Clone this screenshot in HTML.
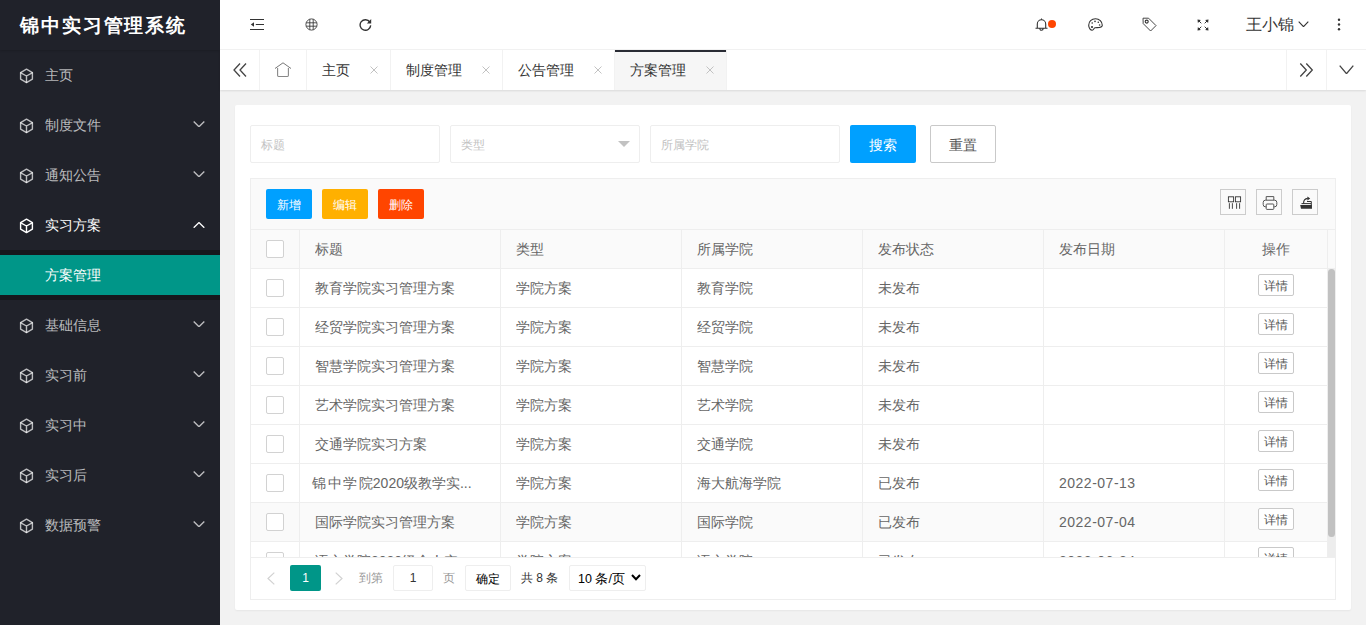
<!DOCTYPE html>
<html><head><meta charset="utf-8"><style>
*{margin:0;padding:0;box-sizing:border-box}
html,body{width:1366px;height:625px;overflow:hidden}
body{background:#f2f2f2;font-family:"Liberation Sans",sans-serif;font-size:14px;color:#333;position:relative}
.a{position:absolute}
svg{display:block;position:absolute}
#side{left:0;top:0;width:220px;height:625px;background:#20222A}
#logo{left:0;top:0;width:220px;height:50px;background:#20222A;box-shadow:0 1px 2px 0 rgba(0,0,0,.15);color:#fff;font-size:19px;font-weight:bold;line-height:51px;padding-left:20px;letter-spacing:1.9px;white-space:nowrap}
.mi{left:0;width:220px;height:50px;line-height:50px;color:rgba(255,255,255,.7);font-size:14px}
.mi .t{position:absolute;left:45px;top:0}
.mi.on{color:#fff}
#child{left:0;top:250px;width:220px;height:50px;background:rgba(0,0,0,.3)}
#cact{left:0;top:255px;width:220px;height:40px;background:#009688;color:#fff;line-height:40px;font-size:14px}
#cact .t{position:absolute;left:45px;top:0}
#hdr{left:220px;top:0;width:1146px;height:50px;background:#fff;border-bottom:1px solid #f2f2f2}
#tabs{left:220px;top:50px;width:1146px;height:40px;background:#fff;box-shadow:0 1px 2px 0 rgba(0,0,0,.1)}
.tb{top:50px;height:40px;line-height:40px;border-right:1px solid #f2f2f2;color:#333;font-size:14px;white-space:nowrap}
.tb .t{position:absolute;top:0}
.tb svg{top:16px}
#card{left:235px;top:105px;width:1116px;height:505px;background:#fff;border-radius:2px;box-shadow:0 1px 2px 0 rgba(0,0,0,.05)}
.inp{top:125px;height:38px;border:1px solid #eee;border-radius:2px;background:#fff;color:#c2c2c2;font-size:12px;line-height:36px;padding-left:10px;padding-top:1px}
.btn{top:125px;height:38px;line-height:38px;padding-top:1px;border-radius:2px;text-align:center;font-size:14px}
.sbtn{top:189px;width:46px;height:30px;line-height:30px;padding-top:1px;color:#fff;font-size:12px;text-align:center;border-radius:2px}
.tic{top:189px;width:26px;height:26px;border:1px solid #ccc}
.vl{width:1px;background:#eee}
.hl{height:1px;background:#eee}
.ct{color:#666;font-size:14px;white-space:nowrap;height:39px;line-height:39px;padding-top:1px;overflow:hidden;text-overflow:ellipsis}
.cb{width:18px;height:18px;border:1px solid #d2d2d2;border-radius:2px;background:#fff}
.dt{width:36px;height:22px;border:1px solid #c9c9c9;border-radius:2px;background:#fff;color:#555;font-size:12px;line-height:20px;padding-top:1px;text-align:center}
.pg{font-size:12px;white-space:nowrap}
</style></head><body>
<div class="a " id="side" style=""></div>
<div class="a" id="logo">锦中实习管理系统</div>
<div class="a mi" style="top:50px"><span class="t">主页</span><svg style="left:19px;top:18px" width="15" height="16" viewBox="0 0 15 16"><g fill="none" stroke="rgba(255,255,255,.7)" stroke-width="1.4" stroke-linejoin="round" stroke-linecap="round"><path d="M7.5 1.2 L13.4 4.6 L13.4 11.2 L7.5 14.6 L1.6 11.2 L1.6 4.6 Z"/><path d="M1.8 4.8 L7.5 8 L13.2 4.8 M7.5 8 L7.5 14.4"/></g></svg></div>
<div class="a mi" style="top:100px"><span class="t">制度文件</span><svg style="left:19px;top:18px" width="15" height="16" viewBox="0 0 15 16"><g fill="none" stroke="rgba(255,255,255,.7)" stroke-width="1.4" stroke-linejoin="round" stroke-linecap="round"><path d="M7.5 1.2 L13.4 4.6 L13.4 11.2 L7.5 14.6 L1.6 11.2 L1.6 4.6 Z"/><path d="M1.8 4.8 L7.5 8 L13.2 4.8 M7.5 8 L7.5 14.4"/></g></svg><svg style="left:193px;top:21px" width="12" height="6" viewBox="0 0 12 6"><path d="M0.7 0.6 L6.0 5.7 L11.3 0.6" fill="none" stroke="rgba(255,255,255,.7)" stroke-width="1.4"/></svg></div>
<div class="a mi" style="top:150px"><span class="t">通知公告</span><svg style="left:19px;top:18px" width="15" height="16" viewBox="0 0 15 16"><g fill="none" stroke="rgba(255,255,255,.7)" stroke-width="1.4" stroke-linejoin="round" stroke-linecap="round"><path d="M7.5 1.2 L13.4 4.6 L13.4 11.2 L7.5 14.6 L1.6 11.2 L1.6 4.6 Z"/><path d="M1.8 4.8 L7.5 8 L13.2 4.8 M7.5 8 L7.5 14.4"/></g></svg><svg style="left:193px;top:21px" width="12" height="6" viewBox="0 0 12 6"><path d="M0.7 0.6 L6.0 5.7 L11.3 0.6" fill="none" stroke="rgba(255,255,255,.7)" stroke-width="1.4"/></svg></div>
<div class="a mi on" style="top:200px"><span class="t">实习方案</span><svg style="left:19px;top:18px" width="15" height="16" viewBox="0 0 15 16"><g fill="none" stroke="#fff" stroke-width="1.4" stroke-linejoin="round" stroke-linecap="round"><path d="M7.5 1.2 L13.4 4.6 L13.4 11.2 L7.5 14.6 L1.6 11.2 L1.6 4.6 Z"/><path d="M1.8 4.8 L7.5 8 L13.2 4.8 M7.5 8 L7.5 14.4"/></g></svg><svg style="left:193px;top:22px" width="12" height="6" viewBox="0 0 12 6"><path d="M0.7 5.7 L6.0 0.6 L11.3 5.7" fill="none" stroke="#fff" stroke-width="1.4"/></svg></div>
<div class="a mi" style="top:300px"><span class="t">基础信息</span><svg style="left:19px;top:18px" width="15" height="16" viewBox="0 0 15 16"><g fill="none" stroke="rgba(255,255,255,.7)" stroke-width="1.4" stroke-linejoin="round" stroke-linecap="round"><path d="M7.5 1.2 L13.4 4.6 L13.4 11.2 L7.5 14.6 L1.6 11.2 L1.6 4.6 Z"/><path d="M1.8 4.8 L7.5 8 L13.2 4.8 M7.5 8 L7.5 14.4"/></g></svg><svg style="left:193px;top:21px" width="12" height="6" viewBox="0 0 12 6"><path d="M0.7 0.6 L6.0 5.7 L11.3 0.6" fill="none" stroke="rgba(255,255,255,.7)" stroke-width="1.4"/></svg></div>
<div class="a mi" style="top:350px"><span class="t">实习前</span><svg style="left:19px;top:18px" width="15" height="16" viewBox="0 0 15 16"><g fill="none" stroke="rgba(255,255,255,.7)" stroke-width="1.4" stroke-linejoin="round" stroke-linecap="round"><path d="M7.5 1.2 L13.4 4.6 L13.4 11.2 L7.5 14.6 L1.6 11.2 L1.6 4.6 Z"/><path d="M1.8 4.8 L7.5 8 L13.2 4.8 M7.5 8 L7.5 14.4"/></g></svg><svg style="left:193px;top:21px" width="12" height="6" viewBox="0 0 12 6"><path d="M0.7 0.6 L6.0 5.7 L11.3 0.6" fill="none" stroke="rgba(255,255,255,.7)" stroke-width="1.4"/></svg></div>
<div class="a mi" style="top:400px"><span class="t">实习中</span><svg style="left:19px;top:18px" width="15" height="16" viewBox="0 0 15 16"><g fill="none" stroke="rgba(255,255,255,.7)" stroke-width="1.4" stroke-linejoin="round" stroke-linecap="round"><path d="M7.5 1.2 L13.4 4.6 L13.4 11.2 L7.5 14.6 L1.6 11.2 L1.6 4.6 Z"/><path d="M1.8 4.8 L7.5 8 L13.2 4.8 M7.5 8 L7.5 14.4"/></g></svg><svg style="left:193px;top:21px" width="12" height="6" viewBox="0 0 12 6"><path d="M0.7 0.6 L6.0 5.7 L11.3 0.6" fill="none" stroke="rgba(255,255,255,.7)" stroke-width="1.4"/></svg></div>
<div class="a mi" style="top:450px"><span class="t">实习后</span><svg style="left:19px;top:18px" width="15" height="16" viewBox="0 0 15 16"><g fill="none" stroke="rgba(255,255,255,.7)" stroke-width="1.4" stroke-linejoin="round" stroke-linecap="round"><path d="M7.5 1.2 L13.4 4.6 L13.4 11.2 L7.5 14.6 L1.6 11.2 L1.6 4.6 Z"/><path d="M1.8 4.8 L7.5 8 L13.2 4.8 M7.5 8 L7.5 14.4"/></g></svg><svg style="left:193px;top:21px" width="12" height="6" viewBox="0 0 12 6"><path d="M0.7 0.6 L6.0 5.7 L11.3 0.6" fill="none" stroke="rgba(255,255,255,.7)" stroke-width="1.4"/></svg></div>
<div class="a mi" style="top:500px"><span class="t">数据预警</span><svg style="left:19px;top:18px" width="15" height="16" viewBox="0 0 15 16"><g fill="none" stroke="rgba(255,255,255,.7)" stroke-width="1.4" stroke-linejoin="round" stroke-linecap="round"><path d="M7.5 1.2 L13.4 4.6 L13.4 11.2 L7.5 14.6 L1.6 11.2 L1.6 4.6 Z"/><path d="M1.8 4.8 L7.5 8 L13.2 4.8 M7.5 8 L7.5 14.4"/></g></svg><svg style="left:193px;top:21px" width="12" height="6" viewBox="0 0 12 6"><path d="M0.7 0.6 L6.0 5.7 L11.3 0.6" fill="none" stroke="rgba(255,255,255,.7)" stroke-width="1.4"/></svg></div>
<div class="a" id="child"></div>
<div class="a" id="cact"><span class="t">方案管理</span></div>
<div class="a" id="hdr"></div>
<svg style="left:250px;top:19px" width="14" height="12" viewBox="0 0 14 12"><g stroke="#333" stroke-width="1.2" fill="none"><path d="M0 0.5H14M5.8 5.5H14M0 10.5H14"/></g><path d="M0.8 5.5 L4 3.2 L4 7.8 Z" fill="#333"/></svg>
<svg style="left:305px;top:18px" width="13" height="13" viewBox="0 0 13 13"><g stroke="#333" stroke-width="0.85" fill="none"><circle cx="6.5" cy="6.5" r="5.6"/><path d="M4.8 1.2V11.8M8.2 1.2V11.8M1.2 4.8H11.8M1.2 8.2H11.8"/></g></svg>
<svg style="left:359px;top:18px" width="13" height="13" viewBox="0 0 13 13"><path d="M10.8 4 A5.3 5.3 0 1 0 11.7 7.4" fill="none" stroke="#333" stroke-width="1.4"/><path d="M12.2 1 L12.2 5.6 L7.8 5.6 Z" fill="#333"/></svg>
<svg style="left:1035px;top:18px" width="13" height="13" viewBox="0 0 13 13"><g fill="none" stroke="#333" stroke-width="1.1"><path d="M2.3 10.2 V6 A4.2 4.2 0 0 1 10.7 6 V10.2 M0.5 10.3 H12.5 M4.8 10.6 A1.7 1.7 0 0 0 8.2 10.6"/><path d="M6.5 0.5V1.8"/></g></svg>
<div class="a" style="left:1048px;top:20px;width:8px;height:8px;border-radius:50%;background:#FF4500"></div>
<svg style="left:1088px;top:18px" width="15" height="13" viewBox="0 0 15 13"><path d="M7.5 0.8 C3.5 0.8 0.7 3.8 0.7 7.2 C0.7 10.3 2.6 12.2 4.2 12.2 C5.8 12.2 5.6 10.2 7 9.8 C9 9.3 14.3 10.3 14.3 7.2 C14.3 3.6 11.3 0.8 7.5 0.8 Z" fill="none" stroke="#333" stroke-width="1.1"/><circle cx="4" cy="9" r="1.1" fill="#333"/><circle cx="4.2" cy="5" r="0.8" fill="#333"/><circle cx="7" cy="3.4" r="0.8" fill="#333"/><circle cx="10.3" cy="4.2" r="0.8" fill="#333"/><circle cx="11.6" cy="7" r="0.8" fill="#333"/></svg>
<svg style="left:1142px;top:17px" width="15" height="15" viewBox="0 0 15 15"><path d="M1 1.2 H6.6 L14 8.6 L8.6 14 L1.2 6.6 Z" fill="none" stroke="#333" stroke-width="0.9" stroke-linejoin="round"/><circle cx="4.7" cy="4.6" r="1.5" fill="none" stroke="#333" stroke-width="1.1"/></svg>
<svg style="left:1197px;top:19px" width="12" height="12" viewBox="0 0 12 12"><path d="M0.5 0.5L3.9 0.9L0.9 3.9Z M11.5 0.5L8.1 0.9L11.1 3.9Z M0.5 11.5L3.9 11.1L0.9 8.1Z M11.5 11.5L8.1 11.1L11.1 8.1Z" fill="#333"/><path d="M1.5 1.5L4.3 4.3M10.5 1.5L7.7 4.3M1.5 10.5L4.3 7.7M10.5 10.5L7.7 7.7" stroke="#333" stroke-width="1"/></svg>
<div class="a" style="left:1246px;top:0;height:50px;line-height:50px;font-size:16px;color:#333;white-space:nowrap">王小锦</div>
<svg style="left:1298px;top:21px" width="11" height="6" viewBox="0 0 11 6"><path d="M0.7 0.6 L5.5 5.7 L10.3 0.6" fill="none" stroke="#333" stroke-width="1.1"/></svg>
<svg style="left:1337px;top:18px" width="4" height="13" viewBox="0 0 4 13"><g fill="#333"><circle cx="2" cy="1.8" r="1.2"/><circle cx="2" cy="6.5" r="1.2"/><circle cx="2" cy="11.2" r="1.2"/></g></svg>
<div class="a" id="tabs"></div>
<div class="a tb" style="left:220px;width:40px;border-right:1px solid #f2f2f2"></div>
<svg style="left:232px;top:62px" width="16" height="16" viewBox="0 0 16 16"><path d="M8 1.5 L2 8 L8 14.5 M14 1.5 L8 8 L14 14.5" fill="none" stroke="#444" stroke-width="1.3"/></svg>
<div class="a tb" style="left:260px;width:47px"></div>
<svg style="left:274px;top:62px" width="18" height="16" viewBox="0 0 18 16"><path d="M1 6.5 L9 0.8 L17 6.5" fill="none" stroke="#777" stroke-width="1"/><path d="M3.6 6 V13.6 Q3.6 14.5 4.5 14.5 H13.5 Q14.4 14.5 14.4 13.6 V6" fill="none" stroke="#888" stroke-width="1.1"/></svg>
<div class="a tb" style="left:307px;width:84px;"><span class="t" style="left:15px">主页</span><svg style="left:63px;top:16px" width="8" height="8" viewBox="0 0 8 8"><path d="M0.5 0.5L7.5 7.5M7.5 0.5L0.5 7.5" stroke="#c2c2c2" stroke-width="1"/></svg></div>
<div class="a tb" style="left:391px;width:112px;"><span class="t" style="left:15px">制度管理</span><svg style="left:91px;top:16px" width="8" height="8" viewBox="0 0 8 8"><path d="M0.5 0.5L7.5 7.5M7.5 0.5L0.5 7.5" stroke="#c2c2c2" stroke-width="1"/></svg></div>
<div class="a tb" style="left:503px;width:112px;"><span class="t" style="left:15px">公告管理</span><svg style="left:91px;top:16px" width="8" height="8" viewBox="0 0 8 8"><path d="M0.5 0.5L7.5 7.5M7.5 0.5L0.5 7.5" stroke="#c2c2c2" stroke-width="1"/></svg></div>
<div class="a tb" style="left:615px;width:112px;background:#f6f6f6;"><span class="t" style="left:15px">方案管理</span><svg style="left:91px;top:16px" width="8" height="8" viewBox="0 0 8 8"><path d="M0.5 0.5L7.5 7.5M7.5 0.5L0.5 7.5" stroke="#c2c2c2" stroke-width="1"/></svg><div class="a" style="left:0;top:0;width:100%;height:2px;background:#292B34"></div></div>
<div class="a" style="left:1286px;top:50px;width:1px;height:40px;background:#f2f2f2"></div>
<div class="a" style="left:1326px;top:50px;width:1px;height:40px;background:#f2f2f2"></div>
<svg style="left:1299px;top:62px" width="16" height="16" viewBox="0 0 16 16"><path d="M1.3 1.5 L7.3 8 L1.3 14.5 M7.3 1.5 L13.3 8 L7.3 14.5" fill="none" stroke="#444" stroke-width="1.3"/></svg>
<svg style="left:1339px;top:65px" width="15" height="9" viewBox="0 0 15 9"><path d="M0.7 0.6 L7.5 8.7 L14.3 0.6" fill="none" stroke="#444" stroke-width="1.3"/></svg>
<div class="a" id="card"></div>
<div class="a inp" style="left:250px;width:190px">标题</div>
<div class="a inp" style="left:450px;width:190px">类型</div>
<svg style="left:618px;top:141px" width="12" height="6" viewBox="0 0 12 6"><path d="M0 0H12L6 6Z" fill="#c2c2c2"/></svg>
<div class="a inp" style="left:650px;width:190px">所属学院</div>
<div class="a btn" style="left:850px;width:66px;background:#00A0FF;color:#fff">搜索</div>
<div class="a btn" style="left:930px;width:66px;background:#fff;color:#555;border:1px solid #c9c9c9;line-height:36px">重置</div>
<div class="a" style="left:250px;top:178px;width:1086px;height:422px;border:1px solid #eee;background:#fff"></div>
<div class="a" style="left:251px;top:179px;width:1084px;height:50px;background:#fafafa"></div>
<div class="a hl" style="left:251px;top:229px;width:1084px"></div>
<div class="a sbtn" style="left:266px;background:#00A0FF">新增</div>
<div class="a sbtn" style="left:322px;background:#FFB000">编辑</div>
<div class="a sbtn" style="left:378px;background:#FF4500">删除</div>
<div class="a tic" style="left:1220px"></div>
<div class="a tic" style="left:1256px"></div>
<div class="a tic" style="left:1292px"></div>
<svg style="left:1227px;top:196px" width="15" height="14" viewBox="0 0 15 14"><g fill="none" stroke="#333" stroke-width="0.9"><rect x="1.4" y="0.8" width="5.2" height="5"/><rect x="8.4" y="0.8" width="5.2" height="5"/><path d="M2.4 7.2V12.8M5.4 7.2V12.8M9.6 7.2V12.8M12.6 7.2V12.8"/></g></svg>
<svg style="left:1262px;top:195px" width="16" height="16" viewBox="0 0 16 16"><g fill="none" stroke="#555" stroke-width="1"><path d="M4.2 5.2V1.6H11.8V5.2"/><rect x="1.2" y="5.2" width="13.6" height="6.6" rx="2.2"/><rect x="4.2" y="9" width="7.6" height="5.4" rx="0.8" fill="#fff"/></g></svg>
<svg style="left:1299px;top:195px" width="15" height="15" viewBox="0 0 15 15"><path d="M1.2 10 H12.8 V13.8 H2 Z" fill="#333"/><path d="M8 6.5 H12.3 V13.5 M2.5 8.6 H12" fill="none" stroke="#333" stroke-width="1"/><path d="M4.6 8.6 C4.4 5.4 6 3.6 8.8 3.4" fill="none" stroke="#333" stroke-width="1.1"/><path d="M8.4 1.4 L11.2 3.4 L8.4 5.4 Z" fill="#333"/></svg>
<div class="a" style="left:251px;top:230px;width:1084px;height:38px;background:#fafafa"></div>
<div class="a hl" style="left:251px;top:268px;width:1084px"></div>
<div class="a" style="left:251px;top:269px;width:1077px;height:288px;overflow:hidden">
<div class="a hl" style="left:0;top:38px;width:1077px"></div>
<div class="a cb" style="left:15px;top:10px"></div>
<div class="a ct" style="left:64px;top:-1px;width:171px;">教育学院实习管理方案</div>
<div class="a ct" style="left:265px;top:-1px;width:151px;">学院方案</div>
<div class="a ct" style="left:446px;top:-1px;width:151px;">教育学院</div>
<div class="a ct" style="left:627px;top:-1px;width:151px;">未发布</div>
<div class="a ct" style="left:808px;top:-1px;width:151px;letter-spacing:0.5px;"></div>
<div class="a dt" style="left:1007px;top:5px">详情</div>
<div class="a hl" style="left:0;top:77px;width:1077px"></div>
<div class="a cb" style="left:15px;top:49px"></div>
<div class="a ct" style="left:64px;top:38px;width:171px;">经贸学院实习管理方案</div>
<div class="a ct" style="left:265px;top:38px;width:151px;">学院方案</div>
<div class="a ct" style="left:446px;top:38px;width:151px;">经贸学院</div>
<div class="a ct" style="left:627px;top:38px;width:151px;">未发布</div>
<div class="a ct" style="left:808px;top:38px;width:151px;letter-spacing:0.5px;"></div>
<div class="a dt" style="left:1007px;top:44px">详情</div>
<div class="a hl" style="left:0;top:116px;width:1077px"></div>
<div class="a cb" style="left:15px;top:88px"></div>
<div class="a ct" style="left:64px;top:77px;width:171px;">智慧学院实习管理方案</div>
<div class="a ct" style="left:265px;top:77px;width:151px;">学院方案</div>
<div class="a ct" style="left:446px;top:77px;width:151px;">智慧学院</div>
<div class="a ct" style="left:627px;top:77px;width:151px;">未发布</div>
<div class="a ct" style="left:808px;top:77px;width:151px;letter-spacing:0.5px;"></div>
<div class="a dt" style="left:1007px;top:83px">详情</div>
<div class="a hl" style="left:0;top:155px;width:1077px"></div>
<div class="a cb" style="left:15px;top:127px"></div>
<div class="a ct" style="left:64px;top:116px;width:171px;">艺术学院实习管理方案</div>
<div class="a ct" style="left:265px;top:116px;width:151px;">学院方案</div>
<div class="a ct" style="left:446px;top:116px;width:151px;">艺术学院</div>
<div class="a ct" style="left:627px;top:116px;width:151px;">未发布</div>
<div class="a ct" style="left:808px;top:116px;width:151px;letter-spacing:0.5px;"></div>
<div class="a dt" style="left:1007px;top:122px">详情</div>
<div class="a hl" style="left:0;top:194px;width:1077px"></div>
<div class="a cb" style="left:15px;top:166px"></div>
<div class="a ct" style="left:64px;top:155px;width:171px;">交通学院实习方案</div>
<div class="a ct" style="left:265px;top:155px;width:151px;">学院方案</div>
<div class="a ct" style="left:446px;top:155px;width:151px;">交通学院</div>
<div class="a ct" style="left:627px;top:155px;width:151px;">未发布</div>
<div class="a ct" style="left:808px;top:155px;width:151px;letter-spacing:0.5px;"></div>
<div class="a dt" style="left:1007px;top:161px">详情</div>
<div class="a hl" style="left:0;top:233px;width:1077px"></div>
<div class="a cb" style="left:15px;top:205px"></div>
<div class="a ct" style="left:61px;top:194px;width:181px;overflow:visible"><span style="letter-spacing:1.6px">锦中学</span>院2020级教学实...</div>
<div class="a ct" style="left:265px;top:194px;width:151px;">学院方案</div>
<div class="a ct" style="left:446px;top:194px;width:151px;">海大航海学院</div>
<div class="a ct" style="left:627px;top:194px;width:151px;">已发布</div>
<div class="a ct" style="left:808px;top:194px;width:151px;letter-spacing:0.5px;">2022-07-13</div>
<div class="a dt" style="left:1007px;top:200px">详情</div>
<div class="a" style="left:0;top:234px;width:1077px;height:38px;background:#fafafa"></div>
<div class="a hl" style="left:0;top:272px;width:1077px"></div>
<div class="a cb" style="left:15px;top:244px"></div>
<div class="a ct" style="left:64px;top:233px;width:171px;">国际学院实习管理方案</div>
<div class="a ct" style="left:265px;top:233px;width:151px;">学院方案</div>
<div class="a ct" style="left:446px;top:233px;width:151px;">国际学院</div>
<div class="a ct" style="left:627px;top:233px;width:151px;">已发布</div>
<div class="a ct" style="left:808px;top:233px;width:151px;letter-spacing:0.5px;">2022-07-04</div>
<div class="a dt" style="left:1007px;top:239px">详情</div>
<div class="a hl" style="left:0;top:311px;width:1077px"></div>
<div class="a cb" style="left:15px;top:283px"></div>
<div class="a ct" style="left:64px;top:272px;width:171px;">语文学院2020级个人实习方案</div>
<div class="a ct" style="left:265px;top:272px;width:151px;">学院方案</div>
<div class="a ct" style="left:446px;top:272px;width:151px;">语文学院</div>
<div class="a ct" style="left:627px;top:272px;width:151px;">已发布</div>
<div class="a ct" style="left:808px;top:272px;width:151px;letter-spacing:0.5px;">2022-06-24</div>
<div class="a dt" style="left:1007px;top:278px">详情</div>
<div class="a vl" style="left:48px;top:0;height:288px"></div>
<div class="a vl" style="left:249px;top:0;height:288px"></div>
<div class="a vl" style="left:430px;top:0;height:288px"></div>
<div class="a vl" style="left:611px;top:0;height:288px"></div>
<div class="a vl" style="left:792px;top:0;height:288px"></div>
<div class="a vl" style="left:973px;top:0;height:288px"></div>
</div>
<div class="a cb" style="left:266px;top:240px"></div>
<div class="a ct" style="left:315px;top:229px">标题</div>
<div class="a ct" style="left:516px;top:229px">类型</div>
<div class="a ct" style="left:697px;top:229px">所属学院</div>
<div class="a ct" style="left:878px;top:229px">发布状态</div>
<div class="a ct" style="left:1059px;top:229px">发布日期</div>
<div class="a ct" style="left:1225px;width:102px;text-align:center;top:229px">操作</div>
<div class="a vl" style="left:299px;top:230px;height:38px"></div>
<div class="a vl" style="left:500px;top:230px;height:38px"></div>
<div class="a vl" style="left:681px;top:230px;height:38px"></div>
<div class="a vl" style="left:862px;top:230px;height:38px"></div>
<div class="a vl" style="left:1043px;top:230px;height:38px"></div>
<div class="a vl" style="left:1224px;top:230px;height:38px"></div>
<div class="a vl" style="left:1327px;top:230px;height:38px"></div>
<div class="a" style="left:1327px;top:269px;width:1px;height:288px;background:#eee"></div>
<div class="a" style="left:1328px;top:269px;width:7px;height:288px;background:#ededed"></div>
<div class="a" style="left:1328px;top:269px;width:7px;height:268px;background:#c1c1c1;border-radius:4px"></div>
<div class="a hl" style="left:251px;top:557px;width:1084px"></div>
<svg style="left:267px;top:572px" width="8" height="13" viewBox="0 0 8 13"><path d="M7.3 0.6 L1 6.5 L7.3 12.4" fill="none" stroke="#d2d2d2" stroke-width="1.2"/></svg>
<div class="a pg" style="left:290px;top:565px;width:31px;height:26px;line-height:26px;background:#009688;color:#fff;text-align:center;border-radius:2px;font-size:12px">1</div>
<svg style="left:335px;top:572px" width="8" height="13" viewBox="0 0 8 13"><path d="M0.7 0.6 L7 6.5 L0.7 12.4" fill="none" stroke="#d2d2d2" stroke-width="1.2"/></svg>
<div class="a pg" style="left:359px;top:565px;line-height:26px;color:#999">到第</div>
<div class="a pg" style="left:393px;top:565px;width:40px;height:26px;line-height:24px;border:1px solid #eee;border-radius:2px;text-align:center;color:#333">1</div>
<div class="a pg" style="left:443px;top:565px;line-height:26px;color:#999">页</div>
<div class="a pg" style="left:465px;top:565px;width:46px;height:26px;line-height:24px;border:1px solid #eee;border-radius:2px;text-align:center;color:#000;padding-top:1px">确定</div>
<div class="a pg" style="left:521px;top:565px;line-height:26px;color:#333;word-spacing:0">共 8 条</div>
<div class="a pg" style="left:569px;top:565px;width:77px;height:26px;line-height:24px;border:1px solid #eee;border-radius:2px;color:#000;padding-left:8px;font-size:12.5px;padding-top:1px">10 条/页</div>
<svg style="left:631px;top:574px" width="10" height="7" viewBox="0 0 10 7"><path d="M1 1 L5 5.2 L9 1" fill="none" stroke="#000" stroke-width="2"/></svg>
</body></html>
